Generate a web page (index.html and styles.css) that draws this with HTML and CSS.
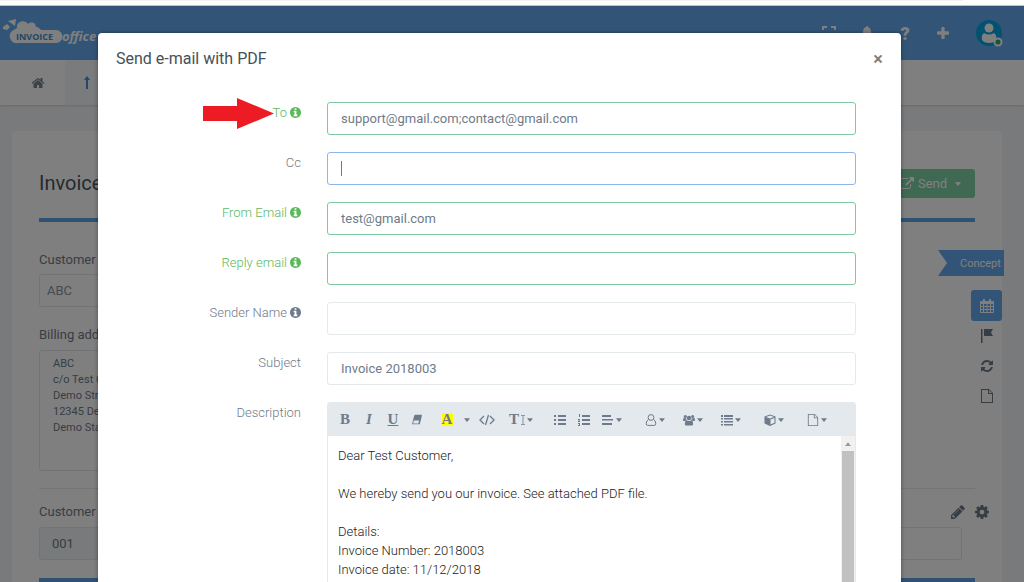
FILE: index.html
```html
<!DOCTYPE html>
<html lang="en">
<head>
  <meta charset="UTF-8" />
  <meta name="viewport" content="width=device-width, initial-scale=1" />
  <title>Invoice Office</title>
  <link rel="stylesheet" href="styles.css">
</head>
<body>
  <!-- icon set -->
  <svg class="sprite" aria-hidden="true">
    <symbol id="i-home" viewBox="0 0 1792 1792"><path d="M1472 992v480q0 26-19 45t-45 19h-384v-384h-256v384h-384q-26 0-45-19t-19-45v-480q0-1 .5-3t.5-3l575-474 575 474q1 2 1 6zm223-69l-62 74q-8 9-21 11h-3q-13 0-21-7l-692-577-692 577q-12 8-24 7-13-2-21-11l-62-74q-8-10-7-23.5t11-21.5l719-599q32-26 76-26t76 26l244 204v-195q0-14 9-23t23-9h192q14 0 23 9t9 23v408l219 182q10 8 11 21.5t-7 23.5z"/></symbol>
    <symbol id="i-info" viewBox="128 128 1536 1536"><path d="M1152 1376v-160q0-14-9-23t-23-9h-96v-512q0-14-9-23t-23-9h-320q-14 0-23 9t-9 23v160q0 14 9 23t23 9h96v320h-96q-14 0-23 9t-9 23v160q0 14 9 23t23 9h448q14 0 23-9t9-23zm-128-896v-160q0-14-9-23t-23-9h-192q-14 0-23 9t-9 23v160q0 14 9 23t23 9h192q14 0 23-9t9-23zm640 416q0 209-103 385.5t-279.5 279.5-385.5 103-385.5-103-279.5-279.5-103-385.5 103-385.5 279.5-279.5 385.5-103 385.5 103 279.5 279.5 103 385.5z"/></symbol>
    <symbol id="i-plus" viewBox="192 128 1408 1408"><path d="M1600 736v192q0 40-28 68t-68 28h-416v416q0 40-28 68t-68 28h-192q-40 0-68-28t-28-68v-416h-416q-40 0-68-28t-28-68v-192q0-40 28-68t68-28h416v-416q0-40 28-68t68-28h192q40 0 68 28t28 68v416h416q40 0 68 28t28 68z"/></symbol>
    <symbol id="i-external" viewBox="0 0 1792 1792"><path d="M1408 928v320q0 119-84.5 203.5t-203.5 84.500h-832q-119 0-203.500-84.500t-84.500-203.500v-832q0-119 84.500-203.500t203.500-84.500h704q14 0 23 9t9 23v64q0 14-9 23t-23 9h-704q-66 0-113 47t-47 113v832q0 66 47 113t113 47h832q66 0 113-47t47-113v-320q0-14 9-23t23-9h64q14 0 23 9t9 23zm384-864v512q0 26-19 45t-45 19-45-19l-176-176-652 652q-10 10-23 10t-23-10l-114-114q-10-10-10-23t10-23l652-652-176-176q-19-19-19-45t19-45 45-19h512q26 0 45 19t19 45z"/></symbol>
    <symbol id="i-refresh" viewBox="128 128 1536 1536"><path d="M1639 1056q0 5-1 7-64 268-268 434.500t-478 166.500q-146 0-282.500-55t-243.500-157l-129 129q-19 19-45 19t-45-19-19-45v-448q0-26 19-45t45-19h448q26 0 45 19t19 45-19 45l-137 137q71 66 161 102t187 36q134 0 250-65t186-179q11-17 53-117 8-23 30-23h192q13 0 22.500 9.500t9.500 22.500zm25-800v448q0 26-19 45t-45 19h-448q-26 0-45-19t-19-45 19-45l138-138q-148-137-349-137-134 0-250 65t-186 179q-11 17-53 117-8 23-30 23h-199q-13 0-22.500-9.500t-9.500-22.500v-7q65-268 270-434.500t480-166.500q146 0 284 55.500t245 156.500l130-129q19-19 45-19t45 19 19 45z"/></symbol>
    <symbol id="i-cog" viewBox="128 128 1536 1536"><path d="M1152 896q0-106-75-181t-181-75-181 75-75 181 75 181 181 75 181-75 75-181zm512-109v222q0 12-8 23t-20 13l-185 28q-19 54-39 91 35 50 107 138 10 12 10 25t-9 23q-27 37-99 108t-94 71q-12 0-26-9l-138-108q-44 23-91 38-16 136-29 186-7 28-36 28h-222q-14 0-24.500-8.500t-11.500-21.500l-28-184q-49-16-90-37l-141 107q-10 9-25 9-14 0-25-11-126-114-165-168-7-10-7-23 0-12 8-23 15-21 51-66.500t54-70.500q-27-50-41-99l-183-27q-13-2-21-12.500t-8-23.500v-222q0-12 8-23t19-13l186-28q14-46 39-92-40-57-107-138-10-12-10-24 0-10 9-23 26-36 98.500-107.500t94.500-71.500q13 0 26 10l138 107q44-23 91-38 16-136 29-186 7-28 36-28h222q14 0 24.500 8.500t11.500 21.500l28 184q49 16 90 37l142-107q9-9 24-9 13 0 25 10 129 119 165 170 7 8 7 22 0 12-8 23-15 21-51 66.500t-54 70.500q26 50 41 98l183 28q13 2 21 12.500t8 23.500z"/></symbol>
    <symbol id="i-pencil" viewBox="128 128 1536 1536"><path d="M491 1536l91-91-235-235-91 91v107h128v128h107zm523-928q0-22-22-22-10 0-17 7l-542 542q-7 7-7 17 0 22 22 22 10 0 17-7l542-542q7-7 7-17zm-54-192l416 416-832 832h-416v-416zm683 96q0 53-37 90l-166 166-416-416 166-165q36-38 90-38 53 0 91 38l235 234q37 39 37 91z"/></symbol>
    <symbol id="i-up" viewBox="0 0 14 14"><path d="M7 0l3 4H8v9H6V4H4z"/></symbol>
    <symbol id="i-expand" viewBox="0 0 14 14"><path d="M0 4V0h5v2H2v2zM9 0h5v4h-2V2H9zM0 10h2v2h3v2H0zM12 10h2v4H9v-2h3z"/></symbol>
    <symbol id="i-bell" viewBox="0 0 14 14"><path d="M7 0q1 0 1 1 3 1 3 5 0 3 2 5H1q2-2 2-5 0-4 3-5 0-1 1-1zM5 12h4q0 2-2 2t-2-2z"/></symbol>
    <symbol id="i-calendar" viewBox="0 0 14 14"><path fill-rule="evenodd" d="M1 2h2V0h2v2h4V0h2v2h2q1 0 1 1v10q0 1-1 1H1q-1 0-1-1V3q0-1 1-1zM1 5v2h2V5zm3 0v2h2.500V5zm3.500 0v2H10V5zM11 5v2h2V5zM1 8v2h2V8zm3 0v2h2.500V8zm3.500 0v2H10V8zM11 8v2h2V8zM1 11v2h2v-2zm3 0v2h2.500v-2zm3.500 0v2H10v-2zm3.500 0v2h2v-2z"/></symbol>
    <symbol id="i-flag" viewBox="0 0 14 14"><path d="M1 0h1.500v14H1zM4 0h9l-2 3.500L13 7H4z"/></symbol>
    <symbol id="i-file" viewBox="0 0 14 14"><path fill-rule="evenodd" d="M1 0h8l4 4v10H1zm1 1v12h10V5H8V1zm7 0v3h3z"/></symbol>
    <symbol id="i-eraser" viewBox="0 0 14 14"><path fill-rule="evenodd" d="M5 1h7q1 0 .7 1L10.500 11q-.4 1-1.500 1H2q-1 0-.6-1L3.700 2Q4 1 5 1zM3.300 7.500L2.500 11h6L9.500 7.500z"/></symbol>
    <symbol id="i-code" viewBox="0 0 16 12"><path d="M5 2L1 6l4 4M11 2l4 4-4 4M9.500 1l-3 10" fill="none" stroke="currentColor" stroke-width="1.300"/></symbol>
    <symbol id="i-height" viewBox="0 0 5 12"><path d="M0 0h5v1H3v10h2v1H0v-1h2V1H0z"/></symbol>
    <symbol id="i-ul" viewBox="0 0 12 12"><path d="M0 1h2v2H0zm0 4h2v2H0zm0 4h2v2H0zM4 1h8v2H4zm0 4h8v2H4zm0 4h8v2H4z"/></symbol>
    <symbol id="i-ol" viewBox="0 0 12 12"><path d="M4 1h8v2H4zm0 4h8v2H4zm0 4h8v2H4zM1 0h1v3H1zM0 5h2v1L1 7h1v1H0V7l1-1H0zM0 9h2v3H0v-1h1v-1H0z"/></symbol>
    <symbol id="i-align" viewBox="0 0 12 12"><path d="M0 1h9v2H0zm0 4h11v1.500H0zM0 9h10v2H0z"/></symbol>
    <symbol id="i-user" viewBox="0 0 12 12"><path d="M6 .6a2.700 2.700 0 1 1 0 5.800A2.700 2.700 0 1 1 6 .6zM3.600 5.400Q1.200 6.400 1.200 9.800q0 1.600 1.500 1.600h6.600q1.500 0 1.500-1.600 0-3.400-2.400-4.400" fill="none" stroke="currentColor" stroke-width="1"/></symbol>
    <symbol id="i-users" viewBox="0 0 13 12"><path d="M6.500 1.500a2.300 2.300 0 1 1 0 4.700 2.300 2.300 0 1 1 0-4.700zM3.800 6q1 1 2.700 1t2.700-1Q11 7 11 10q0 2-1.500 2h-6Q2 12 2 10q0-3 1.800-4zM2.500.5a1.700 1.700 0 1 1 0 3.400 1.700 1.700 0 1 1 0-3.400zM10.500.5a1.700 1.700 0 1 1 0 3.400 1.700 1.700 0 1 1 0-3.400zM0 6.500Q0 3.800 1 3.500q1 1 2.600.5Q3.500 5 3.800 5.500L2.500 7H1Q0 7 0 6.500zM13 6.500Q13 3.800 12 3.500q-1 1-2.600.5.1 1-.2 1.500L10.500 7H12q1 0 1-.5z"/></symbol>
    <symbol id="i-list" viewBox="0 0 12 12"><path d="M0 1h2v2H0zm0 3h2v1.500H0zm0 3h2v1.500H0zm0 3h2v1.500H0zM3 1h9v2H3zm0 3h9v1.500H3zm0 3h9v1.500H3zm0 3h9v1.500H3z"/></symbol>
    <symbol id="i-cube" viewBox="0 0 12 12"><path fill-rule="evenodd" d="M6 .5l5.500 2v7L6 12 .5 9.500v-7zM6 1.600L2 3l4 1.600L10 3zM6.500 5.600v4.900l4-1.800V4z"/></symbol>
    <symbol id="i-caret" viewBox="0 0 8 5"><path d="M0 0h8L4 5z"/></symbol>
  </svg>

  <div class="tab-strip"></div>

  <div class="app">
    <header class="topbar">
      <a href="#" class="logo" aria-label="Invoice Office">
        <svg width="98" height="30" viewBox="0 0 98 30">
          <path class="logo-shape" d="M3 9l4-3 3 3-3 3-4-1zM8 3l8-2-1 7zM17 10c-1-7 8-9 11-4 4-3 8-1 8 3 3 0 4 2 5 3h15a6 6 0 0 1 0 13H18a7 7 0 0 1-6-12z"/>
          <text class="logo-invoice" x="16" y="22">INVOICE</text>
          <text class="logo-office" x="62" y="23">office</text>
        </svg>
      </a>
      <nav class="top-icons">
        <button aria-label="Full screen"><svg class="icon"><use href="#i-expand"/></svg></button>
        <button aria-label="Notifications"><svg class="icon"><use href="#i-bell"/></svg></button>
        <button class="help" aria-label="Help">?</button>
        <button aria-label="Add"><svg class="icon small"><use href="#i-plus"/></svg></button>
        <button class="avatar" aria-label="Account">
          <svg width="28" height="28" viewBox="0 0 28 28">
            <circle cx="13" cy="14" r="13" fill="#00a5e0"/>
            <circle cx="13" cy="9" r="4.500" fill="#fff"/>
            <path d="M8 14q5 3 10 0 3 2 2 7-2 3-7 3t-7-3q-1-5 2-7z" fill="#fff"/>
            <circle cx="22" cy="23" r="3.500" fill="#2fa866" stroke="#fff" stroke-width="2"/>
          </svg>
        </button>
      </nav>
    </header>

    <nav class="subnav">
      <a href="#" aria-label="Home"><svg class="icon"><use href="#i-home"/></svg></a>
      <a href="#" class="active" aria-label="Invoices"><svg class="icon"><use href="#i-up"/></svg></a>
    </nav>

    <main class="card">
      <div class="card-head">
        <h1>Invoice</h1>
        <button class="send"><svg class="icon"><use href="#i-external"/></svg>Send<svg class="caret"><use href="#i-caret"/></svg></button>
      </div>
      <div class="card-body">
        <div class="fields">
          <label for="customer">Customer</label>
          <input type="text" id="customer" class="field" value="ABC">
          <label for="billing">Billing address</label>
          <textarea id="billing" class="field">ABC
c/o Test Customer
Demo Street 1
12345 Demo City
Demo State</textarea>
        </div>
        <div class="rail">
          <div class="ribbon">Concept</div>
          <button class="active" aria-label="Date"><svg class="icon"><use href="#i-calendar"/></svg></button>
          <button aria-label="Flag"><svg class="icon"><use href="#i-flag"/></svg></button>
          <button aria-label="Repeat"><svg class="icon small"><use href="#i-refresh"/></svg></button>
          <button aria-label="File"><svg class="icon"><use href="#i-file"/></svg></button>
        </div>
      </div>
      <div class="card-foot">
        <div class="foot-label">
          <label for="customer-id">Customer ID</label>
          <button aria-label="Edit"><svg class="icon"><use href="#i-pencil"/></svg></button>
          <button aria-label="Settings"><svg class="icon"><use href="#i-cog"/></svg></button>
        </div>
        <div class="foot-inputs">
          <input type="text" id="customer-id" class="field filled" value="001">
          <input type="text" class="field" aria-label="Reference">
        </div>
      </div>
    </main>
    <div class="backdrop"></div>
  </div>

  <div class="modal" role="dialog" aria-labelledby="modal-title">
    <div class="modal-head">
      <h2 id="modal-title">Send e-mail with PDF</h2>
      <button class="close" aria-label="Close">×</button>
    </div>
    <form class="mail-form">
      <div class="row valid">
        <svg class="pointer" width="71" height="31" viewBox="0 0 71 31"><path d="M0 8h34V0l37 15.500L34 31v-8H0z"/></svg>
        <label for="to">To <svg class="info"><use href="#i-info"/></svg></label>
        <input type="text" id="to" value="support@gmail.com;contact@gmail.com">
      </div>
      <div class="row">
        <label for="cc">Cc</label>
        <div class="focus-box"><input type="text" id="cc" class="focused"><span class="cursor"></span></div>
      </div>
      <div class="row valid">
        <label for="from">From Email <svg class="info"><use href="#i-info"/></svg></label>
        <input type="text" id="from" value="test@gmail.com">
      </div>
      <div class="row valid">
        <label for="reply">Reply email <svg class="info"><use href="#i-info"/></svg></label>
        <input type="text" id="reply">
      </div>
      <div class="row">
        <label for="sender">Sender Name <svg class="info"><use href="#i-info"/></svg></label>
        <input type="text" id="sender">
      </div>
      <div class="row">
        <label for="subject">Subject</label>
        <input type="text" id="subject" value="Invoice 2018003">
      </div>
      <div class="row">
        <label id="description-label">Description</label>
        <div class="editor">
          <div class="toolbar">
            <div class="group">
              <button type="button" class="serif">B</button>
              <button type="button" class="serif italic">I</button>
              <button type="button" class="serif underline">U</button>
              <button type="button" aria-label="Clear"><svg class="tool"><use href="#i-eraser"/></svg></button>
            </div>
            <div class="group">
              <button type="button" class="serif"><span class="mark">A</span></button>
              <button type="button" class="narrow" aria-label="Color"><svg class="caret"><use href="#i-caret"/></svg></button>
              <button type="button" aria-label="Code"><svg class="tool code"><use href="#i-code"/></svg></button>
            </div>
            <div class="group">
              <button type="button" class="serif drop">T<svg class="height"><use href="#i-height"/></svg><svg class="caret"><use href="#i-caret"/></svg></button>
            </div>
            <div class="group wide">
              <button type="button" aria-label="Bullets"><svg class="tool"><use href="#i-ul"/></svg></button>
              <button type="button" aria-label="Numbering"><svg class="tool"><use href="#i-ol"/></svg></button>
              <button type="button" class="drop" aria-label="Align"><svg class="tool"><use href="#i-align"/></svg><svg class="caret"><use href="#i-caret"/></svg></button>
            </div>
            <div class="group wide">
              <button type="button" class="drop" aria-label="Contact"><svg class="tool"><use href="#i-user"/></svg><svg class="caret"><use href="#i-caret"/></svg></button>
            </div>
            <div class="group">
              <button type="button" class="drop" aria-label="Customer"><svg class="tool"><use href="#i-users"/></svg><svg class="caret"><use href="#i-caret"/></svg></button>
            </div>
            <div class="group">
              <button type="button" class="drop" aria-label="Details"><svg class="tool"><use href="#i-list"/></svg><svg class="caret"><use href="#i-caret"/></svg></button>
            </div>
            <div class="group wide">
              <button type="button" class="drop" aria-label="Product"><svg class="tool"><use href="#i-cube"/></svg><svg class="caret"><use href="#i-caret"/></svg></button>
            </div>
            <div class="group wide">
              <button type="button" class="drop" aria-label="Document"><svg class="tool"><use href="#i-file"/></svg><svg class="caret"><use href="#i-caret"/></svg></button>
            </div>
          </div>
          <div class="editor-body">
            <div class="editor-text" contenteditable="true" role="textbox" aria-labelledby="description-label">
              <p>Dear Test Customer,</p>
              <p><br></p>
              <p>We hereby send you our invoice. See attached PDF file.</p>
              <p><br></p>
              <p>Details:</p>
              <p>Invoice Number: 2018003</p>
              <p>Invoice date: 11/12/2018</p>
            </div>
            <div class="scrollbar"><svg class="caret up"><use href="#i-caret"/></svg><div class="thumb"></div></div>
          </div>
        </div>
      </div>
    </form>
  </div>
</body>
</html>
```

FILE: styles.css
```css
* {
  box-sizing: border-box;
}
body {
  margin: 0;
  height: 100vh;
  display: flex;
  flex-direction: column;
  overflow: hidden;
  position: relative;
  font-family: Roboto, sans-serif;
  font-size: 13px;
  line-height: 20px;
  color: #6f7b8a;
  background: #fff;
}
h1, h2, p {
  margin: 0;
}
button {
  display: flex;
  align-items: center;
  justify-content: center;
  padding: 0;
  border: 0;
  background: none;
  color: inherit;
  font-family: inherit;
  font-size: 13px;
  cursor: pointer;
}
input, textarea {
  font-family: inherit;
  font-size: 13px;
  outline: none;
}
svg {
  fill: currentColor;
  flex-shrink: 0;
}
.sprite {
  position: absolute;
  width: 0;
  height: 0;
}
.icon {
  width: 14px;
  height: 14px;
}
.icon.small {
  width: 12px;
  height: 12px;
}
.caret {
  width: 6px;
  height: 4px;
}
.tab-strip {
  flex-shrink: 0;
  height: 6px;
  border-bottom: 1px solid #b9c4cc;
}
.tab-strip::before {
  content: "";
  display: block;
  width: 94%;
  height: 1px;
  background: #f1f1f1;
}

/* page behind the dialog */
.app {
  position: relative;
  flex: 1;
  min-height: 0;
  overflow: hidden;
  background: #f2f5f8;
}
.backdrop {
  position: absolute;
  inset: 0;
  background: rgba(0, 0, 0, 0.5);
}
.topbar {
  display: flex;
  align-items: center;
  justify-content: space-between;
  height: 54px;
  padding: 0 20px 0 0;
  background: #64abee;
  color: #fff;
}
.logo {
  display: block;
  height: 30px;
}
.logo-shape {
  fill: #fff;
}
.logo-invoice {
  font: bold 9px "Open Sans", sans-serif;
  fill: #4b8fd0;
}
.logo-office {
  font: italic bold 13px "Open Sans", sans-serif;
  fill: #fff;
}
.top-icons {
  display: flex;
  align-items: center;
}
.top-icons button {
  width: 38px;
}
.top-icons .help {
  font-size: 18px;
  font-weight: 900;
}
.top-icons .avatar {
  width: 28px;
  margin-left: 14px;
}
.subnav {
  display: flex;
  height: 45px;
  background: #fff;
  box-shadow: 0 1px 2px rgba(0, 0, 0, 0.15);
}
.subnav a {
  display: flex;
  align-items: center;
  justify-content: flex-end;
  width: 65px;
  padding-right: 20px;
  color: #7d858c;
}
.subnav .active {
  justify-content: flex-start;
  padding-left: 15px;
  background: #f3f6fa;
  color: #4a8ed8;
}
.card {
  margin: 26px 22px 0 12px;
  padding: 38px 27px 40px;
  background: #fff;
  border-radius: 4px;
}
.card-head {
  display: flex;
  align-items: flex-start;
  justify-content: space-between;
  height: 53px;
  border-bottom: 4px solid #5fa5e6;
}
.card h1 {
  font-size: 20px;
  font-weight: 400;
  line-height: 28px;
  color: #4a5560;
}
.send {
  gap: 4px;
  width: 88px;
  height: 29px;
  border-radius: 3px;
  background: #7fd3a7;
  color: #fff;
}
.send .caret {
  width: 8px;
  margin-left: 3px;
}
.card-body {
  display: flex;
  justify-content: space-between;
  height: 267px;
  padding-top: 28px;
  border-bottom: 1px solid #e4e8ec;
}
.fields {
  width: 300px;
}
.fields label {
  display: block;
}
.field {
  display: block;
  width: 100%;
  height: 33px;
  padding: 0 7px;
  border: 1px solid #e2e6ea;
  border-radius: 3px;
  background: #fff;
  color: #8a95a0;
}
.fields .field {
  margin: 4px 0 18px;
}
.fields textarea.field {
  height: 121px;
  margin: 5px 0 0;
  padding: 5px 13px;
  font-size: 11px;
  line-height: 16px;
  color: #6f7b8a;
  resize: none;
}
.rail {
  display: flex;
  flex-direction: column;
  align-items: flex-end;
  width: 66px;
  margin-right: -29px;
}
.ribbon {
  width: 66px;
  height: 26px;
  padding-left: 22px;
  font-size: 11px;
  line-height: 27px;
  color: #fff;
  background: #64abee;
  clip-path: polygon(0 0, 100% 0, 100% 100%, 0 100%, 9px 50%);
}
.rail button {
  width: 31px;
  height: 30px;
  margin-right: 2px;
}
.rail .active {
  height: 31px;
  margin-top: 14px;
  border-radius: 3px;
  background: #64abee;
  color: #fff;
}
.card-foot {
  padding-top: 13px;
}
.foot-label {
  display: flex;
  align-items: center;
  gap: 10px;
  margin-right: -14px;
}
.foot-label label {
  margin-right: auto;
}
.foot-inputs {
  display: flex;
  gap: 10px;
  margin: 5px 13px 18px 0;
}
.field.filled {
  padding-left: 12px;
  background: #f0f4f7;
  color: #6f7b8a;
}
.card-foot::after {
  content: "";
  display: block;
  height: 4px;
  background: #5fa5e6;
}

/* dialog */
.modal {
  position: absolute;
  top: 33px;
  left: 98px;
  right: 123px;
  bottom: 0;
  overflow: hidden;
  border-radius: 4px 4px 0 0;
  background: #fff;
  box-shadow: 0 0 4px rgba(0, 0, 0, 0.4);
}
.modal-head {
  display: flex;
  align-items: center;
  justify-content: space-between;
  height: 51px;
  padding: 0 18px;
}
.modal h2 {
  font-size: 16px;
  font-weight: 400;
  color: #455158;
}
.close {
  width: 10px;
  font-size: 18px;
  font-weight: 500;
  color: #7b7b7b;
}
.mail-form {
  display: flex;
  flex-direction: column;
  gap: 17px;
  padding: 18px 45px 0 20px;
}
.row {
  position: relative;
  display: grid;
  grid-template-columns: 183px 1fr;
  column-gap: 26px;
}
.row label {
  display: flex;
  align-items: center;
  justify-content: flex-end;
  gap: 3px;
  height: 21px;
  font-weight: 300;
}
.row.valid label {
  color: #5cb85c;
}
.info {
  width: 11px;
  height: 11px;
}
.row input {
  width: 100%;
  height: 33px;
  padding: 0 13px;
  border: 1px solid #e4e9ec;
  border-radius: 3px;
  color: #6f7b8a;
}
.row.valid input {
  border-color: #7acba0;
}
.row input.focused {
  border-color: #8ab8ec;
}
.focus-box {
  position: relative;
}
.cursor {
  position: absolute;
  top: 9px;
  left: 14px;
  width: 1px;
  height: 15px;
  background: #777;
}
.pointer {
  position: absolute;
  top: -4px;
  left: 85px;
  fill: #ed1c24;
}
.editor {
  border: 1px solid #e3e9ec;
  border-radius: 3px 3px 0 0;
}
.toolbar {
  display: flex;
  height: 33px;
  background: #e3e9ec;
}
.group {
  display: flex;
  margin-left: 6px;
}
.group:first-child {
  margin-left: 5px;
}
.group.wide {
  margin-left: 11px;
}
.toolbar button {
  width: 24px;
}
.toolbar .narrow {
  width: 16px;
}
.toolbar .drop {
  gap: 2px;
  width: 32px;
}
.toolbar .serif {
  font-family: "Liberation Serif", serif;
  font-size: 15px;
  font-weight: 700;
}
.toolbar .italic {
  font-style: italic;
}
.toolbar .underline {
  text-decoration: underline;
}
.mark {
  width: 11px;
  line-height: 13px;
  background: #ff0;
}
.tool {
  width: 12px;
  height: 12px;
}
.tool.code {
  width: 16px;
}
.height {
  width: 4px;
  height: 10px;
}
.editor-body {
  display: flex;
  height: 200px;
}
.editor-text {
  flex: 1;
  padding: 10px;
  outline: none;
  font-weight: 300;
  line-height: 19px;
  color: #222;
}
.scrollbar {
  display: flex;
  flex-direction: column;
  align-items: center;
  width: 14px;
  background: #f1f1f1;
  color: #999;
}
.up {
  margin: 6px 0 5px;
  transform: rotate(180deg);
}
.thumb {
  flex: 1;
  width: 12px;
  background: #c1c1c1;
}
```
